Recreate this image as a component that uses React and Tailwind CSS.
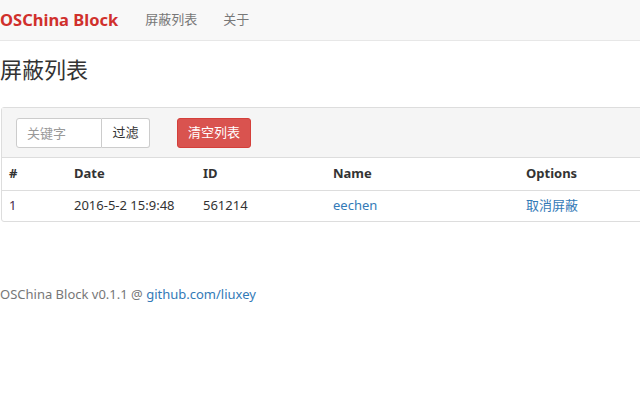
import React from "react";

const rows = [{ id: 1, date: "2016-5-2 15:9:48", uid: "561214", name: "eechen" }];

const App = () => {
  return (
    <div
      className="w-[640px] h-[400px] overflow-hidden bg-white text-[13px] text-[#333]"
      style={{ fontFamily: '"Noto Sans", "Noto Sans CJK SC", sans-serif' }}
    >
      {/* navbar */}
      <div className="h-[41px] bg-[#f8f8f8] border-b border-[#e7e7e7] flex items-center">
        <span className="text-[16.5px] font-bold text-[#d0302c] leading-none">OSChina Block</span>
        <span className="ml-[27px] text-[#777]">屏蔽列表</span>
        <span className="ml-[26px] text-[#777]">关于</span>
      </div>

      <h1 className="mt-[13px] text-[22px] leading-[30px] text-[#333]">屏蔽列表</h1>

      {/* panel */}
      <div className="mt-[23px] ml-[1px] w-[760px] border border-[#ddd] rounded-[3px]">
        <div className="h-[50px] bg-[#f5f5f5] border-b border-[#ddd] flex items-center pl-[14px]">
          <div className="flex">
            <input
              className="w-[86px] h-[30px] border border-[#ccc] rounded-l-[3px] px-[10px] text-[13px] bg-white outline-none placeholder:text-[#999]"
              placeholder="关键字"
            />
            <button className="w-[48px] h-[30px] border border-l-0 border-[#ccc] rounded-r-[3px] bg-white text-[#333]">
              过滤
            </button>
          </div>
          <button className="ml-[27px] w-[74px] h-[30px] rounded-[3px] bg-[#d9534f] border border-[#d43f3a] text-white">
            清空列表
          </button>
        </div>
        <table className="w-full border-collapse text-left">
          <thead>
            <tr className="h-[32px] border-b border-[#ddd]">
              <th className="w-[65px] pl-[7px] font-bold">#</th>
              <th className="w-[129px] pl-[7px] font-bold">Date</th>
              <th className="w-[130px] pl-[7px] font-bold">ID</th>
              <th className="w-[193px] pl-[7px] font-bold">Name</th>
              <th className="pl-[7px] font-bold">Options</th>
            </tr>
          </thead>
          <tbody>
            {rows.map((r) => (
              <tr key={r.id} className="h-[31px]">
                <td className="pl-[7px] text-[#4b2a4b]">{r.id}</td>
                <td className="pl-[7px]">{r.date}</td>
                <td className="pl-[7px]">{r.uid}</td>
                <td className="pl-[7px] text-[#337ab7]">{r.name}</td>
                <td className="pl-[7px] text-[#337ab7]">取消屏蔽</td>
              </tr>
            ))}
          </tbody>
        </table>
      </div>

      <p className="mt-[63px] text-[#777]">
        OSChina Block v0.1.1 @ <span className="text-[#337ab7]">github.com/liuxey</span>
      </p>
    </div>
  );
};

export default App;
